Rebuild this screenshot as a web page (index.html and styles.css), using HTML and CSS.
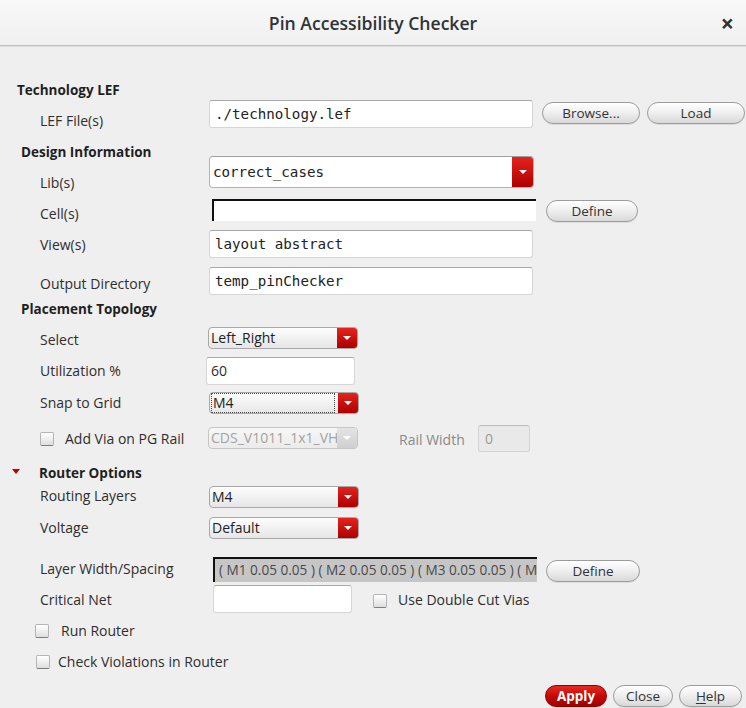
FILE: index.html
```html
<!DOCTYPE html>
<html>
<head>
<meta charset="utf-8">
<title>Pin Accessibility Checker</title>
<link rel="stylesheet" href="styles.css">
</head>
<body>
<div class="window">
  <header class="titlebar">
    <span class="title">Pin Accessibility Checker</span>
    <span class="close">×</span>
  </header>
  <main class="form">
    <div class="heading h-tech">Technology LEF</div>
    <div class="row r-lef">
      <span class="label">LEF File(s)</span>
      <div class="field mono">./technology.lef</div>
      <button class="btn b-browse">Browse...</button>
      <button class="btn b-load">Load</button>
    </div>

    <div class="heading h-design">Design Information</div>
    <div class="row r-lib">
      <span class="label">Lib(s)</span>
      <div class="combo combo-lib"><span class="combo-text mono">correct_cases</span><span class="combo-arrow"></span></div>
    </div>
    <div class="row r-cell">
      <span class="label">Cell(s)</span>
      <div class="field-sunken cell-field"></div>
      <button class="btn b-define">Define</button>
    </div>
    <div class="row r-view">
      <span class="label">View(s)</span>
      <div class="field mono">layout abstract</div>
    </div>
    <div class="row r-out">
      <span class="label">Output Directory</span>
      <div class="field mono">temp_pinChecker</div>
    </div>

    <div class="heading h-place">Placement Topology</div>
    <div class="row r-select">
      <span class="label">Select</span>
      <div class="combo combo-short c-select"><span class="combo-text">Left_Right</span><span class="combo-arrow"></span></div>
    </div>
    <div class="row r-util">
      <span class="label">Utilization %</span>
      <div class="field field-short">60</div>
    </div>
    <div class="row r-snap">
      <span class="label">Snap to Grid</span>
      <div class="combo combo-short c-snap"><span class="combo-text"><span class="focus-ring">M4</span></span><span class="combo-arrow"></span></div>
    </div>
    <div class="row r-via">
      <label class="check-label via-label"><span class="check"></span><span class="check-text">Add Via on PG Rail</span></label>
      <div class="combo combo-short combo-disabled"><span class="combo-text">CDS_V1011_1x1_VH</span><span class="combo-arrow"></span></div>
      <span class="rail-label">Rail Width</span>
      <div class="field field-disabled">0</div>
    </div>

    <div class="heading h-router"><span class="expander"></span>Router Options</div>
    <div class="row r-routing">
      <span class="label">Routing Layers</span>
      <div class="combo combo-short c-route"><span class="combo-text">M4</span><span class="combo-arrow"></span></div>
    </div>
    <div class="row r-volt">
      <span class="label">Voltage</span>
      <div class="combo combo-short c-route"><span class="combo-text">Default</span><span class="combo-arrow"></span></div>
    </div>
    <div class="row r-layer">
      <span class="label">Layer Width/Spacing</span>
      <div class="field-sunken layer-field"><span class="layer-text">( M1 0.05 0.05 ) ( M2 0.05 0.05 ) ( M3 0.05 0.05 ) ( M</span></div>
      <button class="btn b-define2">Define</button>
    </div>
    <div class="row r-crit">
      <span class="label">Critical Net</span>
      <div class="field crit-field"></div>
      <label class="check-label dbl-label"><span class="check"></span><span class="check-text">Use Double Cut Vias</span></label>
    </div>
    <div class="row r-run">
      <label class="check-label run-label"><span class="check"></span><span class="check-text">Run Router</span></label>
    </div>
    <div class="row r-checkv">
      <label class="check-label cv-label"><span class="check"></span><span class="check-text">Check Violations in Router</span></label>
    </div>

    <div class="actions">
      <button class="btn btn-apply">Apply</button>
      <button class="btn btn-close">Close</button>
      <button class="btn btn-help"><u>H</u>elp</button>
    </div>
  </main>
</div>
</body>
</html>
```
FILE: styles.css
```css
* { box-sizing: border-box; }
html, body { margin: 0; padding: 0; }
body {
  width: 746px;
  height: 708px;
  overflow: hidden;
  background: #efefef;
  font-family: "Open Sans", "Noto Sans", sans-serif;
  font-size: 14px;
  color: #2e2e2e;
}

/* title bar */
.titlebar {
  height: 46px;
  display: grid;
  grid-template-columns: 1fr auto 1fr;
  align-items: center;
  background: linear-gradient(#f8f8f8, #f0f0f0);
  border-bottom: 1px solid #bdbdbd;
  box-shadow: 0 1px 1px rgba(0,0,0,0.06);
}
.title {
  grid-column: 2;
  font-size: 17.6px;
  font-weight: 600;
  color: #2e3436;
}
.close {
  grid-column: 3;
  justify-self: end;
  margin-right: 12px;
  font-size: 23px;
  font-weight: 700;
  color: #2e3436;
  line-height: 20px;
}

/* form */
.form { padding-top: 36px; }
.row { display: flex; align-items: flex-start; }
.label {
  flex: none;
  width: 169px;
  margin-left: 40px;
  line-height: 16px;
  white-space: nowrap;
}
.heading {
  font-weight: 700;
  font-size: 13.5px;
  line-height: 16px;
  color: #1f1f1f;
  white-space: nowrap;
}
.mono {
  font-family: "DejaVu Sans Mono", monospace;
  font-size: 14.2px;
  color: #222;
}

/* text fields */
.field {
  flex: none;
  width: 324px;
  height: 28px;
  background: #fff;
  border: 1px solid #d6d6d6;
  border-top-color: #a9a9a9;
  border-radius: 3px;
  padding: 0 5px;
  line-height: 26px;
  white-space: nowrap;
  overflow: hidden;
}
.field-short { width: 149px; font-family: "Open Sans", sans-serif; font-size: 14px; padding-left: 4px; }
.field-disabled {
  width: 52px;
  height: 27px;
  background: #e9e9e9;
  border-color: #d4d4d4;
  border-top-color: #bdbdbd;
  color: #9a9a9a;
  padding-left: 6px;
}
.field-sunken {
  flex: none;
  width: 324px;
  background: #fff;
  border-top: 2px solid #111;
  border-left: 2px solid #111;
  white-space: nowrap;
  overflow: hidden;
}

/* combos */
.combo {
  flex: none;
  display: flex;
  height: 22px;
  border: 1px solid #a8a8a8;
  border-radius: 4px;
  background: linear-gradient(#fdfdfd, #e6e6e6);
  overflow: hidden;
}
.combo-text {
  flex: 1;
  padding-left: 2px;
  line-height: 20px;
  white-space: nowrap;
  overflow: hidden;
  color: #222;
}
.combo-arrow {
  flex: none;
  width: 20px;
  background: linear-gradient(#e4231d, #ad0000);
  display: flex;
  align-items: center;
  justify-content: center;
}
.combo-arrow::after {
  content: "";
  border-left: 4px solid transparent;
  border-right: 4px solid transparent;
  border-top: 4px solid #fff;
}
.combo-lib {
  width: 325px;
  height: 32px;
  background: #fff;
  border-color: #b4b4b4;
  border-top-color: #a0a0a0;
}
.combo-lib .combo-text { line-height: 30px; padding-left: 3px; }
.combo-lib .combo-arrow { width: 21px; }
.combo-short { width: 150px; }
.focus-ring {
  display: block;
  width: 124px;
  height: 20px;
  border: 1px dotted #444;
  line-height: 18px;
  padding-left: 1px;
}
.c-snap .combo-text { padding-left: 1px; }
.combo-disabled {
  border-color: #c6c6c6;
  background: linear-gradient(#f7f7f7, #ebebeb);
}
.combo-disabled .combo-text { color: #a3a3a3; }
.combo-disabled .combo-arrow { background: linear-gradient(#e4e4e4, #cfcfcf); }

/* buttons */
.btn {
  flex: none;
  height: 22px;
  padding: 0;
  border: 1px solid #9d9d9d;
  border-radius: 11px;
  background: linear-gradient(#ffffff, #f0f0f0 45%, #d9d9d9);
  font-family: "Open Sans", sans-serif;
  font-size: 13.5px;
  line-height: 20px;
  color: #333;
  box-shadow: 0 1px 0 rgba(0,0,0,0.08);
}
.btn-apply {
  width: 62px;
  background: linear-gradient(#e62b22, #c50a05 50%, #a00000);
  border-color: #8c0000;
  color: #fff;
  font-weight: 700;
}
.btn-close { width: 60px; }
.btn-help { width: 63px; }
.btn-help u { text-underline-offset: 2px; }

/* checkboxes */
.check-label {
  flex: none;
  display: flex;
  align-items: flex-start;
  white-space: nowrap;
}
.check {
  flex: none;
  width: 14px;
  height: 14px;
  border: 1px solid #b5b5b5;
  border-bottom-color: #7d7d7d;
  border-radius: 2px;
  background: linear-gradient(#ffffff, #dedede);
}
.check-text { line-height: 16px; }

/* rows */
.h-tech { height: 16px; padding-left: 17px; }
.r-lef { height: 46px; }
.r-lef .label { margin-top: 15px; }
.r-lef .field { margin-top: 2px; }
.r-lef .btn { margin-top: 4px; width: 98px; }
.b-browse { margin-left: 9px; }
.b-load { margin-left: 7px; }

.h-design { height: 12px; padding-left: 21px; }
.r-lib { height: 40px; }
.r-lib .label { margin-top: 19px; }

.r-cell { height: 32px; }
.r-cell .label { margin-top: 10px; }
.cell-field { margin-top: 3px; margin-left: 3px; height: 22px; }
.b-define { margin-top: 4px; margin-left: 10px; width: 92px; }

.r-view { height: 37px; }
.r-view .label { margin-top: 9px; }
.r-view .field { margin-top: 2px; }
.r-out { height: 36px; }
.r-out .label { margin-top: 11px; }
.r-out .field { margin-top: 2px; }

.h-place { height: 16px; padding-left: 21px; }
.r-select { height: 37px; }
.r-select .label { margin-top: 15px; }
.c-select { margin-top: 10px; margin-left: -1px; }
.r-util { height: 35px; }
.r-util .label { margin-top: 9px; }
.r-util .field { margin-top: 3px; margin-left: -3px; }
.r-snap { height: 32px; }
.r-snap .label { margin-top: 6px; }
.c-snap { margin-top: 3px; }

.r-via { height: 44px; }
.via-label { width: 168px; margin-left: 40px; margin-top: 11px; }
.via-label .check-text { margin-left: 11px; margin-top: -1px; }
.combo-disabled { margin-top: 6px; }
.rail-label {
  flex: none;
  width: 79px;
  margin-left: 41px;
  margin-top: 11px;
  line-height: 16px;
  color: #8a8a8a;
}
.r-via .field-disabled { margin-top: 4px; }

.h-router { height: 16px; display: flex; align-items: center; }
.expander {
  flex: none;
  margin-left: 12px;
  margin-right: 19px;
  border-left: 4.5px solid transparent;
  border-right: 4.5px solid transparent;
  border-top: 5px solid #c00000;
  margin-top: -3px;
}
.r-routing { height: 31px; }
.r-routing .label { margin-top: 7px; }
.r-routing .combo { margin-top: 5px; }
.r-volt { height: 33px; }
.r-volt .label { margin-top: 8px; }
.r-volt .combo { margin-top: 5px; }

.r-layer { height: 39px; }
.r-layer .label { margin-top: 16px; }
.layer-field {
  margin-top: 12px;
  margin-left: 4px;
  height: 25px;
  background: #c6c6c6;
  color: #4a4a4a;
  padding-left: 4px;
  line-height: 22px;
}
.layer-text { font-size: 13.6px; }
.b-define2 { margin-top: 15px; margin-left: 9px; width: 94px; }

.r-crit { height: 32px; }
.r-crit .label { margin-top: 8px; }
.crit-field { width: 139px; margin-top: 1px; margin-left: 4px; }
.dbl-label { margin-left: 21px; margin-top: 10px; }
.dbl-label .check-text { margin-left: 11px; margin-top: -2px; }

.r-run { height: 31px; }
.run-label { margin-left: 35px; margin-top: 8px; }
.run-label .check-text { margin-left: 12px; margin-top: -1px; }
.r-checkv { height: 31px; }
.cv-label { margin-left: 36px; margin-top: 8px; }
.cv-label .check-text { margin-left: 8px; margin-top: -1px; }

.actions {
  display: flex;
  justify-content: flex-end;
  gap: 6px;
  padding-top: 7px;
  padding-right: 4px;
}
```
